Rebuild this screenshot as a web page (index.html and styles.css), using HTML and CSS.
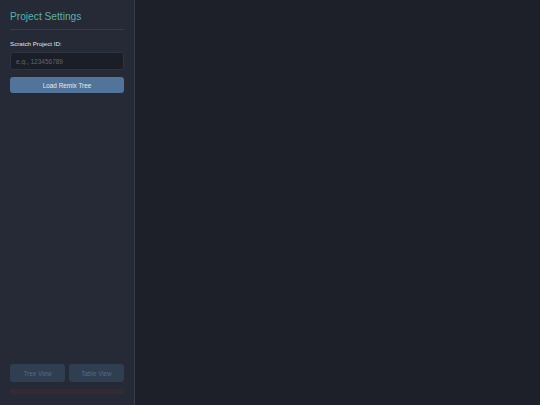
FILE: index.html
```html
<!DOCTYPE html>
<html lang="en">
<head>
    <meta charset="UTF-8">
    <title>Scratch Remix Tree</title>
    <link rel="stylesheet" href="styles.css">
</head>
<body>
    <div id="app">
        <div class="sidebar">
            <h1>Project Settings</h1>
            <label for="projectId">Scratch Project ID:</label>
            <input type="text" id="projectId" placeholder="e.g., 123456789">
            <button class="load-btn">Load Remix Tree</button>
            <div class="spacer"></div>
            <div class="view-buttons">
                <button disabled>Tree View</button>
                <button disabled>Table View</button>
            </div>
            <div class="status-bar"></div>
        </div>
        <div class="main"></div>
    </div>
</body>
</html>
```

FILE: styles.css
```css
body {
    margin: 0;
    font-family: "Liberation Sans", Arial, sans-serif;
    background-color: #1d2029;
    color: #e2e4e9;
}

#app {
    display: flex;
    height: 405px;
}

.sidebar {
    width: 114px;
    padding: 0 10px 11px 10px;
    background-color: #252a36;
    border-right: 1px solid #363c4a;
    display: flex;
    flex-direction: column;
}

.sidebar h1 {
    margin: 11px 0 0 0;
    padding-bottom: 7px;
    font-size: 10.2px;
    font-weight: normal;
    color: #5fb0a6;
    border-bottom: 1px solid #363c49;
}

.sidebar label {
    margin-top: 10px;
    font-size: 6.2px;
    color: #e4e6ea;
}

.sidebar input {
    margin-top: 5px;
    height: 18px;
    box-sizing: border-box;
    padding: 0 5px;
    font-family: inherit;
    font-size: 6.5px;
    color: #d0d3da;
    background-color: #1b1e26;
    border: 1px solid #2e3340;
    border-radius: 3px;
}

.sidebar input::placeholder {
    color: #5f6572;
}

button {
    font-family: inherit;
    font-size: 6.4px;
    border: none;
    border-radius: 3px;
    cursor: pointer;
}

.load-btn {
    margin-top: 7px;
    height: 16px;
    background-color: #52739a;
    color: #e6ebf2;
}

.spacer {
    flex-grow: 1;
}

.view-buttons {
    display: flex;
    gap: 4px;
}

.view-buttons button {
    flex: 1;
    height: 18px;
    font-size: 6.3px;
    background-color: #2f3e51;
    color: #5b6a7c;
    cursor: default;
}

.status-bar {
    margin-top: 7px;
    height: 5px;
    background-color: #342a31;
    border-radius: 1px;
}

.main {
    flex-grow: 1;
}
```
